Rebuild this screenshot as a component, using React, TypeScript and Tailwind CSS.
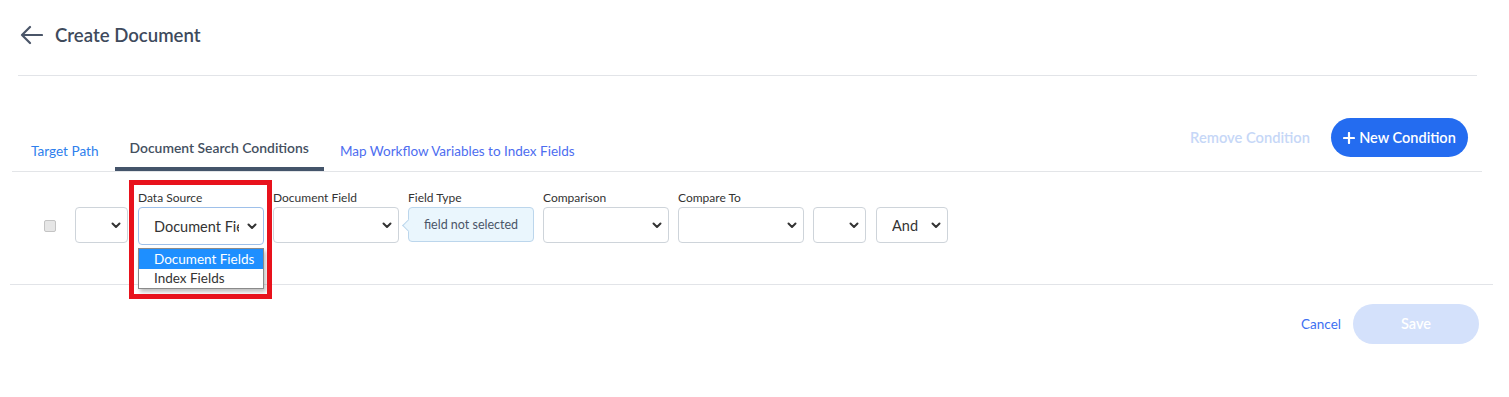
import React from "react";

const Chevron = () => (
  <svg width="10" height="7" viewBox="0 0 10 7" className="shrink-0">
    <polyline points="1.5,1.5 5,5 8.5,1.5" fill="none" stroke="#333" strokeWidth="2" strokeLinecap="round" strokeLinejoin="round" />
  </svg>
);

const Select = ({ w, value, focused }: { w: string; value?: string; focused?: boolean }) => (
  <div
    className={`${w} h-[36px] flex items-center justify-between rounded-[4px] border bg-white pl-[15px] pr-[6px] ${
      focused ? "border-[#9ec0ea] h-[38px]" : "border-[#ced4da]"
    }`}
  >
    <span className="pt-[2px] mr-[8px] text-[14.5px] text-[#333] overflow-hidden whitespace-nowrap">{value ?? ""}</span>
    <Chevron />
  </div>
);

const Field = ({ label, children }: { label: string; children: React.ReactNode }) => (
  <div className="flex flex-col w-[126px]">
    <div className="text-[12px] leading-[16px] h-[17px] text-[#333]">{label}</div>
    {children}
  </div>
);

export default function App() {
  return (
    <div className="w-[1509px] h-[397px] bg-white relative overflow-hidden" style={{ fontFamily: "Lato, 'Open Sans', sans-serif" }}>
      {/* Header */}
      <div className="h-[70px] flex items-center pl-[20px] gap-[12px]">
        <svg width="23" height="20" viewBox="0 0 23 20">
          <path d="M22 10H2M10 2L2 10l8 8" fill="none" stroke="#4a5568" strokeWidth="2.2" strokeLinecap="round" strokeLinejoin="round" />
        </svg>
        <span className="pt-[2px] text-[18.6px] font-semibold text-[#3e4a5c]">Create Document</span>
      </div>
      <div className="mt-[5px] ml-[18px] mr-[32px] h-px bg-[#e2e4e8]" />

      {/* Tabs row */}
      <div className="mt-[43px] ml-[12px] mr-[27px] h-[53px] border-b border-[#e3e5e8] flex items-end">
        <div className="pl-[19px] pr-[16px] pb-[12px] text-[13.6px] leading-[16px] text-[#2f80ed]">Target Path</div>
        <div className="flex flex-col">
          <div className="px-[15px] text-[13.9px] leading-[16px] font-semibold text-[#44505f]">Document Search Conditions</div>
          <div className="mt-[11px] h-[4px] bg-[#44546a]" />
        </div>
        <div className="pl-[16px] pb-[12px] text-[13.5px] leading-[16px] text-[#4d6df0]">Map Workflow Variables to Index Fields</div>
        <div className="ml-auto self-start mt-[-1px] flex items-center pr-[14px]">
          <span className="text-[14.7px] font-semibold text-[#c6d7f7] mr-[21px]">Remove Condition</span>
          <button className="h-[39px] w-[137px] rounded-full bg-[#246cf0] text-white text-[14.5px] font-semibold flex items-center justify-center gap-[4px]">
            <svg width="12" height="12" viewBox="0 0 12 12">
              <path d="M6 1v10M1 6h10" stroke="white" strokeWidth="2.2" strokeLinecap="round" />
            </svg>
            New Condition
          </button>
        </div>
      </div>

      {/* Conditions row */}
      <div className="relative ml-[10px] mr-[16px] h-[113px] border-b border-[#e2e4e8]">
        <div className="flex items-start pt-[18px] pl-[34px]">
          <div className="w-[12px] h-[12px] mt-[30px] rounded-[2px] border border-[#c4c4c4] bg-[#e6e6e6]" />
          <div className="ml-[19px] mt-[17px]">
            <Select w="w-[53px]" />
          </div>
          <div className="ml-[10px] flex gap-[9px]">
            <Field label="Data Source">
              <Select w="w-[126px]" value="Document Fields" focused />
            </Field>
            <Field label="Document Field">
              <Select w="w-[126px]" />
            </Field>
            <Field label="Field Type">
              <div className="relative w-[126px] h-[35px] rounded-[4px] border border-[#bcd6ec] bg-[#eaf6fd] flex items-center justify-center text-[12.5px] text-[#4a5568]">
                <div className="absolute left-[-5px] top-[13px] w-[9px] h-[9px] rotate-45 bg-[#eaf6fd] border-l border-b border-[#bcd6ec]" />
                <span className="relative pt-[2px]">field not selected</span>
              </div>
            </Field>
            <Field label="Comparison">
              <Select w="w-[126px]" />
            </Field>
            <Field label="Compare To">
              <Select w="w-[126px]" />
            </Field>
            <div className="mt-[17px]">
              <Select w="w-[53px]" />
            </div>
            <div className="mt-[17px] ml-[1px]">
              <Select w="w-[72px]" value="And" />
            </div>
          </div>
        </div>
        {/* dropdown list */}
        <div className="absolute left-[128px] top-[76px] w-[126px] border border-[#8a8a8a] bg-white shadow-[2px_3px_4px_rgba(0,0,0,0.25)] text-[13.5px]">
          <div className="h-[20px] leading-[20px] pl-[15px] bg-[#1e8fff] text-white">Document Fields</div>
          <div className="h-[19px] leading-[19px] pl-[15px] text-[#333]">Index Fields</div>
        </div>
      </div>

      {/* Footer */}
      <div className="flex items-center justify-end mt-[19px] mr-[30px]">
        <span className="text-[13.5px] text-[#3d6ff2] mr-[12px]">Cancel</span>
        <button className="w-[126px] h-[40px] rounded-full bg-[#d4e1fb] text-white text-[14.5px] font-semibold">Save</button>
      </div>

      {/* red annotation box */}
      <div className="absolute left-[129px] top-[180px] w-[143px] h-[119px] border-[5px] border-[#e8121c] pointer-events-none" />
    </div>
  );
}
